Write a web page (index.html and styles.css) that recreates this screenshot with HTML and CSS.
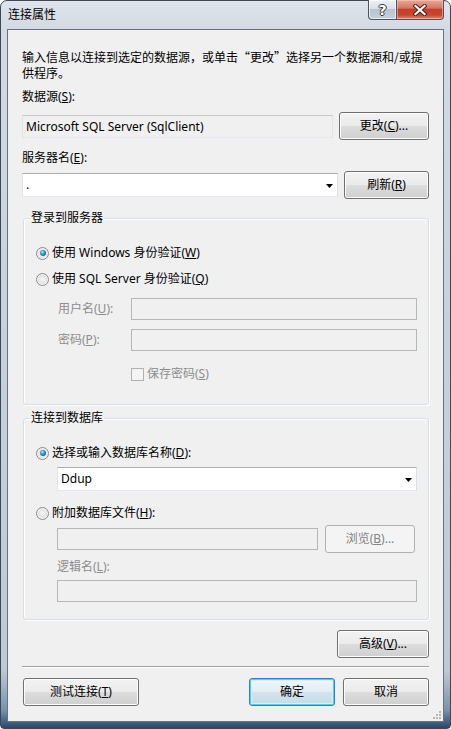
FILE: index.html
```html
<!DOCTYPE html>
<html lang="zh-CN">
<head>
  <meta charset="UTF-8">
  <title>连接属性</title>
  <link rel="stylesheet" href="styles.css">
</head>
<body>
<div class="window">
  <div class="titlebar">
    <span class="title">连接属性</span>
    <div class="caption">
      <span class="cap help">?</span>
      <span class="cap close">
        <svg width="14" height="12" viewBox="0 0 14 12">
          <path d="M2.5 2 L11.5 10 M11.5 2 L2.5 10" stroke="#4a2019" stroke-width="4.2" stroke-linecap="square"/>
          <path d="M2.5 2 L11.5 10 M11.5 2 L2.5 10" stroke="#fff" stroke-width="2.2" stroke-linecap="square"/>
        </svg>
      </span>
    </div>
  </div>

  <div class="client">
    <p class="intro">输入信息以连接到选定的数据源，或单击“更改”选择另一个数据源和/或提供程序。</p>

    <div class="label label-ds">数据源(<u>S</u>):</div>
    <div class="row row-ds">
      <div class="textbox readonly">Microsoft SQL Server (SqlClient)</div>
      <button class="btn">更改(<u>C</u>)...</button>
    </div>

    <div class="label label-srv">服务器名(<u>E</u>):</div>
    <div class="row row-srv">
      <div class="combo"><span>.</span><svg class="arrow" width="7" height="4" viewBox="0 0 7 4"><path d="M0 0 H7 L3.5 4 Z" fill="#000"/></svg></div>
      <button class="btn">刷新(<u>R</u>)</button>
    </div>

    <fieldset class="group group-login">
      <legend>登录到服务器</legend>
      <div class="group-body">
        <label class="option"><span class="radio on"></span>使用 Windows 身份验证(<u>W</u>)</label>
        <label class="option option-next"><span class="radio"></span>使用 SQL Server 身份验证(<u>Q</u>)</label>
        <div class="cred">
          <span class="dim">用户名(<u>U</u>):</span>
          <div class="textbox disabled"></div>
          <span class="dim">密码(<u>P</u>):</span>
          <div class="textbox disabled"></div>
        </div>
        <label class="check dim"><span class="checkbox"></span>保存密码(<u>S</u>)</label>
      </div>
    </fieldset>

    <fieldset class="group group-db">
      <legend>连接到数据库</legend>
      <div class="group-body">
        <label class="option"><span class="radio on"></span>选择或输入数据库名称(<u>D</u>):</label>
        <div class="combo combo-db"><span>Ddup</span><svg class="arrow" width="7" height="4" viewBox="0 0 7 4"><path d="M0 0 H7 L3.5 4 Z" fill="#000"/></svg></div>
        <label class="option option-attach"><span class="radio"></span>附加数据库文件(<u>H</u>):</label>
        <div class="row row-file">
          <div class="textbox disabled"></div>
          <button class="btn" disabled>浏览(<u>B</u>)...</button>
        </div>
        <div class="dim label-logic">逻辑名(<u>L</u>):</div>
        <div class="textbox disabled logic"></div>
      </div>
    </fieldset>

    <div class="advanced">
      <button class="btn btn-adv">高级(<u>V</u>)...</button>
    </div>

    <div class="separator"></div>

    <div class="footer">
      <button class="btn btn-test">测试连接(<u>T</u>)</button>
      <button class="btn btn-ok default">确定</button>
      <button class="btn btn-cancel">取消</button>
    </div>

    <svg class="grip" width="9" height="9" viewBox="0 0 9 9">
      <rect x="6" y="0" width="2" height="2" fill="#b8b8b8"/>
      <rect x="3" y="3" width="2" height="2" fill="#b8b8b8"/>
      <rect x="6" y="3" width="2" height="2" fill="#b8b8b8"/>
      <rect x="0" y="6" width="2" height="2" fill="#b8b8b8"/>
      <rect x="3" y="6" width="2" height="2" fill="#b8b8b8"/>
      <rect x="6" y="6" width="2" height="2" fill="#b8b8b8"/>
    </svg>
  </div>
</div>
</body>
</html>
```

FILE: styles.css
```css
body {
  margin: 0;
  font: 12px/16px "Noto Sans", "Noto Sans CJK SC", sans-serif;
  color: #000;
}
u {
  text-decoration: underline;
  text-underline-offset: 1px;
}

/* window frame */
.window {
  width: 451px;
  height: 729px;
  box-sizing: border-box;
  border: 1px solid #3e4855;
  border-radius: 7px 7px 4px 4px;
  padding: 0 6px 6px;
  display: flex;
  flex-direction: column;
  background: linear-gradient(180deg, #dfe5ec 0, #d3dae3 28px, #c9d2dc 40%, #bfc9d4 92%, #7893ad 97.5%, #24496e 100%);
}
.titlebar {
  height: 28px;
  display: flex;
  justify-content: space-between;
  align-items: flex-start;
}
.title {
  margin: 6px 0 0 1px;
}
.caption {
  display: flex;
  margin-top: -1px;
}
.cap {
  height: 20px;
  box-sizing: border-box;
  border: 1px solid #4a5562;
  border-top: none;
  display: flex;
  align-items: center;
  justify-content: center;
}
.help {
  width: 29px;
  border-radius: 0 0 0 4px;
  background: linear-gradient(180deg, #eef1f5 0, #d9e0e8 45%, #b9c4d0 50%, #c6d0db 100%);
  box-shadow: inset 0 0 0 1px rgba(255,255,255,0.6);
  color: #fff;
  font: bold 14px/16px "DejaVu Sans", sans-serif;
  text-shadow: 1px 0 0 #333, -1px 0 0 #333, 0 1px 0 #333, 0 -1px 0 #333;
}
.close {
  width: 47px;
  border-left: none;
  border-radius: 0 0 4px 0;
  background: linear-gradient(180deg, #e9a797 0, #d87662 42%, #c2402a 50%, #c9472f 80%, #e08a72 100%);
  box-shadow: inset 0 0 0 1px rgba(255,210,200,0.5);
}

/* client area */
.client {
  flex: 1;
  position: relative;
  border: 1px solid #69737e;
  background: #f0f0f0;
  padding: 19px 14px 0;
  display: flex;
  flex-direction: column;
}
.intro {
  margin: 0;
  font-family: "Noto Sans CJK SC", sans-serif;
}
.label-ds { margin-top: 8px; }
.label-srv { margin-top: 10px; }

.row {
  display: grid;
  align-items: center;
  column-gap: 6px;
}
.row-ds {
  margin-top: 7px;
  grid-template-columns: 311px 90px;
}
.row-srv {
  margin-top: 5px;
  grid-template-columns: 316px 85px;
}

/* inputs */
.textbox {
  height: 22px;
  box-sizing: border-box;
  border: 1px solid;
  border-color: #abadb3 #dbdfe6 #e3e9ef #e2e3ea;
  background: #fff;
  padding: 0 3px;
  line-height: 20px;
  white-space: nowrap;
}
.readonly {
  height: 23px;
  line-height: 21px;
  background: #f0f0f0;
  border-color: #c5c9ce #e2e3ea #e3e9ef #e2e3ea;
}
.disabled {
  background: #f0f0f0;
  border-color: #b4b6b9;
}
.combo {
  height: 24px;
  box-sizing: border-box;
  border: 1px solid;
  border-color: #abadb3 #dbdfe6 #e3e9ef #e2e3ea;
  background: #fff;
  display: flex;
  align-items: center;
  justify-content: space-between;
  padding: 0 4px 0 3px;
}
.arrow {
  flex: none;
  margin-top: 1px;
}

/* buttons */
.btn {
  height: 28px;
  box-sizing: border-box;
  border: 1px solid #707070;
  border-radius: 3px;
  background: linear-gradient(180deg, #f2f2f2 0, #ebebeb 50%, #dddddd 50%, #cfcfcf 100%);
  box-shadow: inset 0 0 0 1px #fcfcfc;
  font: inherit;
  color: #000;
  padding: 0;
}
.btn:disabled {
  border-color: #adb2b5;
  background: #f4f4f4;
  box-shadow: none;
  color: #838383;
}
.default {
  border-color: #2f83c4;
  background: linear-gradient(180deg, #eef5f9 0, #e3eef4 50%, #d2e4ed 50%, #c4dbe6 100%);
  box-shadow: inset 0 0 0 1px #56cbf3, inset 0 0 0 2px #dcedf5;
}

/* group boxes */
.group {
  margin: 0 0 0 1px;
  width: 406px;
  box-sizing: border-box;
  border: 1px solid #d5dfe5;
  border-radius: 3px;
  box-shadow: inset 1px 1px 0 #fff, 1px 1px 0 #fff;
  padding: 0;
  min-width: 0;
}
.group legend {
  margin-left: 6px;
  padding: 0 1px;
}
.group-login { margin-top: 11px; }
.group-db { margin-top: 5px; }
.group-body {
  padding: 19px 0 22px 12px;
}
.group-db .group-body {
  padding-bottom: 17px;
}
.option {
  display: flex;
  align-items: center;
  height: 16px;
}
.option-next { margin-top: 10px; }
.option-attach { margin-top: 14px; }
.radio {
  width: 13px;
  height: 13px;
  box-sizing: border-box;
  border-radius: 50%;
  border: 1px solid #8b8c8d;
  background: radial-gradient(circle at 50% 50%, #f6f6f6 0, #e6e6e6 45%, #cdcdcd 100%);
  box-shadow: inset 0 0 0 1px #f7f7f7;
  margin-right: 3px;
  position: relative;
  flex: none;
}
.radio.on::after {
  content: "";
  position: absolute;
  left: 2.5px;
  top: 2.5px;
  width: 6px;
  height: 6px;
  border-radius: 50%;
  background: radial-gradient(circle at 40% 35%, #b9ecff 0, #3c9be0 35%, #135ea3 75%, #0c3f6e 100%);
}
.dim {
  color: #8d8d8d;
}
.cred {
  margin: 11px 0 0 22px;
  display: grid;
  grid-template-columns: 73px 286px;
  grid-template-rows: 22px 22px;
  row-gap: 9px;
  align-items: center;
}
.check {
  display: flex;
  align-items: center;
  height: 16px;
  margin: 15px 0 0 95px;
}
.checkbox {
  width: 13px;
  height: 13px;
  box-sizing: border-box;
  border: 1px solid #b1b1b1;
  background: #f4f4f4;
  margin-right: 3px;
}
.combo-db {
  margin: 6px 0 0 21px;
  width: 360px;
}
.row-file {
  margin: 4px 0 0 21px;
  grid-template-columns: 261px 90px;
  column-gap: 7px;
}
.label-logic {
  margin: 6px 0 0 21px;
}
.logic {
  margin: 5px 0 0 21px;
  width: 360px;
}

/* bottom */
.advanced {
  margin-top: 10px;
  display: flex;
  justify-content: flex-end;
}
.btn-adv { width: 92px; }
.separator {
  margin-top: 8px;
  border-top: 1px solid #a0a0a0;
  border-bottom: 1px solid #fff;
}
.footer {
  margin-top: 10px;
  display: flex;
  gap: 8px;
}
.btn-test {
  width: 116px;
  margin-left: 1px;
  margin-right: auto;
}
.btn-ok,
.btn-cancel {
  width: 86px;
}
.grip {
  position: absolute;
  right: 1px;
  bottom: 1px;
}
```
